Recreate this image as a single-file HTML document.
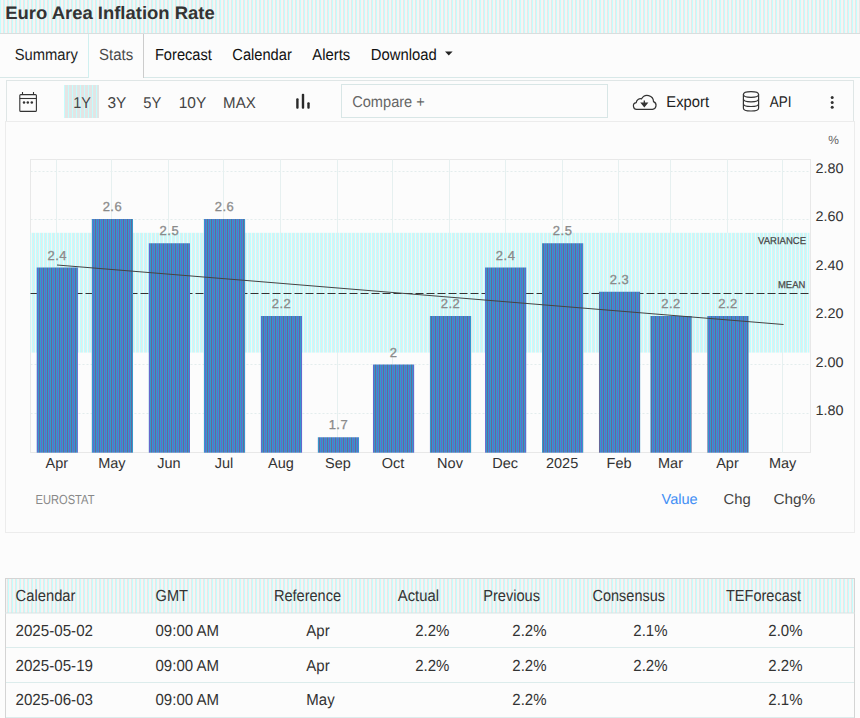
<!DOCTYPE html><html><head><meta charset="utf-8"><style>
html,body{margin:0;padding:0;background:#fcfcfc;width:860px;height:718px;overflow:hidden}
svg{display:block;font-family:'Liberation Sans', sans-serif;text-rendering:geometricPrecision}
</style></head><body>
<svg width="860" height="718" viewBox="0 0 860 718">
<defs>
<pattern id="phdr" x="0" y="0" width="4" height="4" patternUnits="userSpaceOnUse">
<rect x="0" y="0" width="1" height="4" fill="#c3fefe"/><rect x="1" y="0" width="1" height="4" fill="#f6f3f2"/><rect x="2" y="0" width="1" height="4" fill="#f5f5f4"/><rect x="3" y="0" width="1" height="4" fill="#e8e7e7"/>
</pattern>
<pattern id="pband" x="0" y="0" width="4" height="4" patternUnits="userSpaceOnUse">
<rect x="0" y="0" width="1" height="4" fill="#bfffff"/><rect x="1" y="0" width="1" height="4" fill="#e8e8e8"/><rect x="2" y="0" width="1" height="4" fill="#bfffff"/><rect x="3" y="0" width="1" height="4" fill="#f4f4f4"/>
</pattern>
<pattern id="pbar" x="0" y="0" width="4" height="4" patternUnits="userSpaceOnUse">
<rect x="0" y="0" width="1" height="4" fill="#3399cc"/><rect x="1" y="0" width="1" height="4" fill="#6666cc"/><rect x="2" y="0" width="1" height="4" fill="#3399cc"/><rect x="3" y="0" width="1" height="4" fill="#666699"/>
</pattern>
<pattern id="psel" x="0" y="0" width="4" height="4" patternUnits="userSpaceOnUse">
<rect x="0" y="0" width="4" height="4" fill="#e4e4e4"/><rect x="0" y="0" width="1" height="4" fill="#c4fdfd"/>
</pattern>
</defs>
<rect x="0" y="0" width="860" height="718" fill="#fcfcfc"/>

<rect x="0" y="0" width="860" height="33" fill="url(#phdr)"/>
<rect x="0" y="33" width="860" height="1" fill="#d8dede"/>
<text x="5.2" y="19.2" font-size="18" fill="#333" font-weight="700" text-anchor="start" textLength="209.5" lengthAdjust="spacingAndGlyphs" >Euro Area Inflation Rate</text>
<rect x="0" y="77" width="88" height="1" fill="#d8e8e8"/>
<rect x="143" y="77" width="717" height="1" fill="#d8e8e8"/>
<rect x="88" y="34" width="1" height="44" fill="#d0f0f0"/>
<rect x="143" y="34" width="1" height="44" fill="#cccccc"/>
<text transform="translate(14.7 60.2) scale(1 1.07)" x="0" y="0" font-size="15" fill="#222" font-weight="400" text-anchor="start" textLength="63.2" lengthAdjust="spacingAndGlyphs" >Summary</text>
<text transform="translate(99 60.0) scale(1 1.07)" x="0" y="0" font-size="15" fill="#4a4a4a" font-weight="400" text-anchor="start" textLength="34.2" lengthAdjust="spacingAndGlyphs" >Stats</text>
<text transform="translate(154.9 60.3) scale(1 1.07)" x="0" y="0" font-size="15" fill="#111" font-weight="400" text-anchor="start" textLength="57" lengthAdjust="spacingAndGlyphs" >Forecast</text>
<text transform="translate(232.3 60.3) scale(1 1.07)" x="0" y="0" font-size="15" fill="#111" font-weight="400" text-anchor="start" textLength="59.5" lengthAdjust="spacingAndGlyphs" >Calendar</text>
<text transform="translate(312.3 60.3) scale(1 1.07)" x="0" y="0" font-size="15" fill="#111" font-weight="400" text-anchor="start" textLength="37.9" lengthAdjust="spacingAndGlyphs" >Alerts</text>
<text transform="translate(370.7 60.3) scale(1 1.07)" x="0" y="0" font-size="15" fill="#111" font-weight="400" text-anchor="start" textLength="66" lengthAdjust="spacingAndGlyphs" >Download</text>
<path d="M445 51.5 L452.6 51.5 L448.8 55.6 Z" fill="#222"/>
<rect x="6.5" y="80.5" width="847" height="41" fill="#fcfcfc" stroke="#dfe6e6" stroke-width="1"/>
<g fill="none" stroke="#333" stroke-width="1.1"><rect x="19.8" y="94.6" width="16.6" height="16.8" rx="1"/><line x1="19.8" y1="98.5" x2="36.4" y2="98.5"/><line x1="22.5" y1="92" x2="22.5" y2="95"/><line x1="33.5" y1="92" x2="33.5" y2="95"/></g>
<g fill="#333"><circle cx="24" cy="102.4" r="1.25"/><circle cx="27.8" cy="102.4" r="1.25"/><circle cx="31.8" cy="102.4" r="1.25"/></g>
<rect x="64" y="85" width="35" height="33" fill="url(#psel)"/>
<text transform="translate(73.3 107.6) scale(1 1.04)" x="0" y="0" font-size="15" fill="#444" font-weight="400" text-anchor="start" textLength="17.7" lengthAdjust="spacingAndGlyphs" >1Y</text>
<text transform="translate(107.4 107.6) scale(1 1.04)" x="0" y="0" font-size="15" fill="#444" font-weight="400" text-anchor="start" textLength="18.9" lengthAdjust="spacingAndGlyphs" >3Y</text>
<text transform="translate(143.2 107.6) scale(1 1.04)" x="0" y="0" font-size="15" fill="#444" font-weight="400" text-anchor="start" textLength="18" lengthAdjust="spacingAndGlyphs" >5Y</text>
<text transform="translate(178.7 107.6) scale(1 1.04)" x="0" y="0" font-size="15" fill="#444" font-weight="400" text-anchor="start" textLength="27.6" lengthAdjust="spacingAndGlyphs" >10Y</text>
<text transform="translate(223.1 107.6) scale(1 1.04)" x="0" y="0" font-size="15" fill="#444" font-weight="400" text-anchor="start" textLength="32.6" lengthAdjust="spacingAndGlyphs" >MAX</text>
<g fill="#2a2a2a"><rect x="296.2" y="98.2" width="2.4" height="10.6" rx="1"/><rect x="301.8" y="93.7" width="2.4" height="15.1" rx="1"/><rect x="307.3" y="102.2" width="2.4" height="6.6" rx="1"/></g>
<rect x="341.5" y="84.5" width="266" height="33" fill="#fcfcfc" stroke="#d8e6e6" stroke-width="1"/>
<text transform="translate(352.2 107.2) scale(1 1.04)" x="0" y="0" font-size="15" fill="#666" font-weight="400" text-anchor="start" textLength="72.6" lengthAdjust="spacingAndGlyphs" >Compare +</text>
<path d="M637.5 109.3 H652.5 A4 4 0 0 0 653.5 101.6 A6.3 6.3 0 0 0 641.6 98.8 A4.4 4.4 0 0 0 636.2 102.6 A3.4 3.4 0 0 0 637.5 109.3 Z" fill="none" stroke="#333" stroke-width="1.2"/>
<path d="M644.3 100.5 V105 M641.6 103.2 L644.3 106.4 L647 103.2 Z" fill="#333" stroke="#333" stroke-width="1.3"/>
<text transform="translate(666.3 107.1) scale(1 1.04)" x="0" y="0" font-size="15" fill="#222" font-weight="400" text-anchor="start" textLength="42.7" lengthAdjust="spacingAndGlyphs" >Export</text>
<g fill="none" stroke="#333" stroke-width="1.2"><ellipse cx="751" cy="94.5" rx="7.6" ry="2.8"/><path d="M743.4 94.5 V108.2 A7.6 2.8 0 0 0 758.6 108.2 V94.5"/><path d="M743.4 99.1 A7.6 2.8 0 0 0 758.6 99.1"/><path d="M743.4 103.7 A7.6 2.8 0 0 0 758.6 103.7"/></g>
<text transform="translate(769.7 107.0) scale(1 1.04)" x="0" y="0" font-size="15" fill="#222" font-weight="400" text-anchor="start" textLength="21.7" lengthAdjust="spacingAndGlyphs" >API</text>
<g fill="#333"><circle cx="832.2" cy="97.6" r="1.5"/><circle cx="832.2" cy="102.5" r="1.5"/><circle cx="832.2" cy="107.3" r="1.5"/></g>
<rect x="5.5" y="121.5" width="849" height="411" fill="none" stroke="#ececec" stroke-width="1"/>
<line x1="30.5" y1="171.5" x2="810.5" y2="171.5" stroke="#e3eded" stroke-width="1" stroke-dasharray="2,2"/>
<line x1="30.5" y1="219.5" x2="810.5" y2="219.5" stroke="#e3eded" stroke-width="1" stroke-dasharray="2,2"/>
<line x1="30.5" y1="268.5" x2="810.5" y2="268.5" stroke="#e3eded" stroke-width="1" stroke-dasharray="2,2"/>
<line x1="30.5" y1="316.5" x2="810.5" y2="316.5" stroke="#e3eded" stroke-width="1" stroke-dasharray="2,2"/>
<line x1="30.5" y1="364.5" x2="810.5" y2="364.5" stroke="#e3eded" stroke-width="1" stroke-dasharray="2,2"/>
<line x1="30.5" y1="413.5" x2="810.5" y2="413.5" stroke="#e3eded" stroke-width="1" stroke-dasharray="2,2"/>
<rect x="30.5" y="159.5" width="780.0" height="293.0" fill="none" stroke="#e8e8e8" stroke-width="1"/>
<line x1="56.5" y1="159.5" x2="56.5" y2="452.5" stroke="#e6f0f0" stroke-width="1"/>
<line x1="111.5" y1="159.5" x2="111.5" y2="452.5" stroke="#e6f0f0" stroke-width="1"/>
<line x1="168.5" y1="159.5" x2="168.5" y2="452.5" stroke="#e6f0f0" stroke-width="1"/>
<line x1="223.5" y1="159.5" x2="223.5" y2="452.5" stroke="#e6f0f0" stroke-width="1"/>
<line x1="280.5" y1="159.5" x2="280.5" y2="452.5" stroke="#e6f0f0" stroke-width="1"/>
<line x1="337.5" y1="159.5" x2="337.5" y2="452.5" stroke="#e6f0f0" stroke-width="1"/>
<line x1="392.5" y1="159.5" x2="392.5" y2="452.5" stroke="#e6f0f0" stroke-width="1"/>
<line x1="449.5" y1="159.5" x2="449.5" y2="452.5" stroke="#e6f0f0" stroke-width="1"/>
<line x1="505.5" y1="159.5" x2="505.5" y2="452.5" stroke="#e6f0f0" stroke-width="1"/>
<line x1="562.5" y1="159.5" x2="562.5" y2="452.5" stroke="#e6f0f0" stroke-width="1"/>
<line x1="618.5" y1="159.5" x2="618.5" y2="452.5" stroke="#e6f0f0" stroke-width="1"/>
<line x1="670.5" y1="159.5" x2="670.5" y2="452.5" stroke="#e6f0f0" stroke-width="1"/>
<line x1="727.5" y1="159.5" x2="727.5" y2="452.5" stroke="#e6f0f0" stroke-width="1"/>
<line x1="782.5" y1="159.5" x2="782.5" y2="452.5" stroke="#e6f0f0" stroke-width="1"/>
<rect x="30.5" y="232.8" width="779.0" height="119.8" fill="url(#pband)"/>
<line x1="30.5" y1="293.5" x2="810.5" y2="293.5" stroke="#333" stroke-width="1" stroke-dasharray="8,3"/>
<rect x="36.70" y="267.50" width="41.2" height="185.20" fill="url(#pbar)"/>
<text x="57.30" y="259.50" font-size="13" fill="#8a8a8a" font-weight="400" text-anchor="middle" letter-spacing="0.5" stroke="#8a8a8a" stroke-width="0.3">2.4</text>
<text x="56.80" y="467.6" font-size="14.5" fill="#333" font-weight="400" text-anchor="middle" >Apr</text>
<rect x="91.82" y="219.00" width="41.2" height="233.70" fill="url(#pbar)"/>
<text x="112.42" y="211.00" font-size="13" fill="#8a8a8a" font-weight="400" text-anchor="middle" letter-spacing="0.5" stroke="#8a8a8a" stroke-width="0.3">2.6</text>
<text x="111.92" y="467.6" font-size="14.5" fill="#333" font-weight="400" text-anchor="middle" >May</text>
<rect x="148.79" y="243.25" width="41.2" height="209.45" fill="url(#pbar)"/>
<text x="169.39" y="235.25" font-size="13" fill="#8a8a8a" font-weight="400" text-anchor="middle" letter-spacing="0.5" stroke="#8a8a8a" stroke-width="0.3">2.5</text>
<text x="168.89" y="467.6" font-size="14.5" fill="#333" font-weight="400" text-anchor="middle" >Jun</text>
<rect x="203.91" y="219.00" width="41.2" height="233.70" fill="url(#pbar)"/>
<text x="224.51" y="211.00" font-size="13" fill="#8a8a8a" font-weight="400" text-anchor="middle" letter-spacing="0.5" stroke="#8a8a8a" stroke-width="0.3">2.6</text>
<text x="224.01" y="467.6" font-size="14.5" fill="#333" font-weight="400" text-anchor="middle" >Jul</text>
<rect x="260.87" y="316.00" width="41.2" height="136.70" fill="url(#pbar)"/>
<text x="281.47" y="308.00" font-size="13" fill="#8a8a8a" font-weight="400" text-anchor="middle" letter-spacing="0.5" stroke="#8a8a8a" stroke-width="0.3">2.2</text>
<text x="280.97" y="467.6" font-size="14.5" fill="#333" font-weight="400" text-anchor="middle" >Aug</text>
<rect x="317.84" y="437.25" width="41.2" height="15.45" fill="url(#pbar)"/>
<text x="338.44" y="429.25" font-size="13" fill="#8a8a8a" font-weight="400" text-anchor="middle" letter-spacing="0.5" stroke="#8a8a8a" stroke-width="0.3">1.7</text>
<text x="337.94" y="467.6" font-size="14.5" fill="#333" font-weight="400" text-anchor="middle" >Sep</text>
<rect x="372.96" y="364.50" width="41.2" height="88.20" fill="url(#pbar)"/>
<text x="393.56" y="356.50" font-size="13" fill="#8a8a8a" font-weight="400" text-anchor="middle" letter-spacing="0.5" stroke="#8a8a8a" stroke-width="0.3">2</text>
<text x="393.06" y="467.6" font-size="14.5" fill="#333" font-weight="400" text-anchor="middle" >Oct</text>
<rect x="429.92" y="316.00" width="41.2" height="136.70" fill="url(#pbar)"/>
<text x="450.52" y="308.00" font-size="13" fill="#8a8a8a" font-weight="400" text-anchor="middle" letter-spacing="0.5" stroke="#8a8a8a" stroke-width="0.3">2.2</text>
<text x="450.02" y="467.6" font-size="14.5" fill="#333" font-weight="400" text-anchor="middle" >Nov</text>
<rect x="485.05" y="267.50" width="41.2" height="185.20" fill="url(#pbar)"/>
<text x="505.65" y="259.50" font-size="13" fill="#8a8a8a" font-weight="400" text-anchor="middle" letter-spacing="0.5" stroke="#8a8a8a" stroke-width="0.3">2.4</text>
<text x="505.15" y="467.6" font-size="14.5" fill="#333" font-weight="400" text-anchor="middle" >Dec</text>
<rect x="542.01" y="243.25" width="41.2" height="209.45" fill="url(#pbar)"/>
<text x="562.61" y="235.25" font-size="13" fill="#8a8a8a" font-weight="400" text-anchor="middle" letter-spacing="0.5" stroke="#8a8a8a" stroke-width="0.3">2.5</text>
<text x="562.11" y="467.6" font-size="14.5" fill="#333" font-weight="400" text-anchor="middle" >2025</text>
<rect x="598.97" y="291.75" width="41.2" height="160.95" fill="url(#pbar)"/>
<text x="619.57" y="283.75" font-size="13" fill="#8a8a8a" font-weight="400" text-anchor="middle" letter-spacing="0.5" stroke="#8a8a8a" stroke-width="0.3">2.3</text>
<text x="619.07" y="467.6" font-size="14.5" fill="#333" font-weight="400" text-anchor="middle" >Feb</text>
<rect x="650.42" y="316.00" width="41.2" height="136.70" fill="url(#pbar)"/>
<text x="671.02" y="308.00" font-size="13" fill="#8a8a8a" font-weight="400" text-anchor="middle" letter-spacing="0.5" stroke="#8a8a8a" stroke-width="0.3">2.2</text>
<text x="670.52" y="467.6" font-size="14.5" fill="#333" font-weight="400" text-anchor="middle" >Mar</text>
<rect x="707.39" y="316.00" width="41.2" height="136.70" fill="url(#pbar)"/>
<text x="727.99" y="308.00" font-size="13" fill="#8a8a8a" font-weight="400" text-anchor="middle" letter-spacing="0.5" stroke="#8a8a8a" stroke-width="0.3">2.2</text>
<text x="727.49" y="467.6" font-size="14.5" fill="#333" font-weight="400" text-anchor="middle" >Apr</text>
<text x="782.61" y="467.6" font-size="14.5" fill="#333" font-weight="400" text-anchor="middle" >May</text>
<line x1="57" y1="265" x2="783.5" y2="324.5" stroke="#444" stroke-width="1"/>
<text x="806" y="244" font-size="10" fill="#484848" font-weight="400" text-anchor="end" textLength="48" lengthAdjust="spacingAndGlyphs" stroke="#484848" stroke-width="0.25">VARIANCE</text>
<text x="805.3" y="287.7" font-size="10" fill="#484848" font-weight="400" text-anchor="end" textLength="27.3" lengthAdjust="spacingAndGlyphs" stroke="#484848" stroke-width="0.25">MEAN</text>
<text x="815.5" y="172.50" font-size="14" fill="#333" font-weight="400" text-anchor="start" textLength="28" lengthAdjust="spacingAndGlyphs" >2.80</text>
<text x="815.5" y="221.00" font-size="14" fill="#333" font-weight="400" text-anchor="start" textLength="28" lengthAdjust="spacingAndGlyphs" >2.60</text>
<text x="815.5" y="269.50" font-size="14" fill="#333" font-weight="400" text-anchor="start" textLength="28" lengthAdjust="spacingAndGlyphs" >2.40</text>
<text x="815.5" y="318.00" font-size="14" fill="#333" font-weight="400" text-anchor="start" textLength="28" lengthAdjust="spacingAndGlyphs" >2.20</text>
<text x="815.5" y="366.50" font-size="14" fill="#333" font-weight="400" text-anchor="start" textLength="28" lengthAdjust="spacingAndGlyphs" >2.00</text>
<text x="815.5" y="415.00" font-size="14" fill="#333" font-weight="400" text-anchor="start" textLength="28" lengthAdjust="spacingAndGlyphs" >1.80</text>
<text x="828.3" y="143.8" font-size="12" fill="#666" font-weight="400" text-anchor="start" >%</text>
<text transform="translate(35.5 503.6) scale(1 1.05)" x="0" y="0" font-size="12.5" fill="#888" font-weight="400" text-anchor="start" textLength="59" lengthAdjust="spacingAndGlyphs" >EUROSTAT</text>
<text x="661.5" y="504" font-size="14.5" fill="#428ff5" font-weight="400" text-anchor="start" textLength="36.2" lengthAdjust="spacingAndGlyphs" >Value</text>
<text x="723.6" y="504" font-size="14.5" fill="#444" font-weight="400" text-anchor="start" textLength="27.2" lengthAdjust="spacingAndGlyphs" >Chg</text>
<text x="773.4" y="504" font-size="14.5" fill="#444" font-weight="400" text-anchor="start" textLength="41.9" lengthAdjust="spacingAndGlyphs" >Chg%</text>
<rect x="5" y="578" width="850" height="35" fill="url(#phdr)"/>
<rect x="5.5" y="578.5" width="849" height="140" fill="none" stroke="#d4d4d4" stroke-width="1"/>
<rect x="5" y="612.5" width="850" height="1" fill="#d8e4e4"/>
<rect x="6" y="647" width="848" height="1" fill="#dcecec"/>
<rect x="6" y="682" width="848" height="1" fill="#dcecec"/>
<rect x="6" y="717" width="848" height="1" fill="#dcecec"/>
<text transform="translate(15.5 601.2) scale(1 1.07)" x="0" y="0" font-size="15" fill="#333" font-weight="400" text-anchor="start" textLength="60" lengthAdjust="spacingAndGlyphs" >Calendar</text>
<text transform="translate(155.5 601.2) scale(1 1.07)" x="0" y="0" font-size="15" fill="#333" font-weight="400" text-anchor="start" textLength="32.5" lengthAdjust="spacingAndGlyphs" >GMT</text>
<text transform="translate(274 601.2) scale(1 1.07)" x="0" y="0" font-size="15" fill="#333" font-weight="400" text-anchor="start" textLength="67" lengthAdjust="spacingAndGlyphs" >Reference</text>
<text transform="translate(397.8 601.2) scale(1 1.07)" x="0" y="0" font-size="15" fill="#333" font-weight="400" text-anchor="start" textLength="41.2" lengthAdjust="spacingAndGlyphs" >Actual</text>
<text transform="translate(483.2 601.2) scale(1 1.07)" x="0" y="0" font-size="15" fill="#333" font-weight="400" text-anchor="start" textLength="56.8" lengthAdjust="spacingAndGlyphs" >Previous</text>
<text transform="translate(592.5 601.2) scale(1 1.07)" x="0" y="0" font-size="15" fill="#333" font-weight="400" text-anchor="start" textLength="72.5" lengthAdjust="spacingAndGlyphs" >Consensus</text>
<text transform="translate(726 601.2) scale(1 1.07)" x="0" y="0" font-size="15" fill="#333" font-weight="400" text-anchor="start" textLength="75" lengthAdjust="spacingAndGlyphs" >TEForecast</text>
<text transform="translate(15.5 636.0) scale(1 1.07)" x="0" y="0" font-size="15" fill="#333" font-weight="400" text-anchor="start" textLength="77.5" lengthAdjust="spacingAndGlyphs" >2025-05-02</text>
<text transform="translate(155.5 636.0) scale(1 1.07)" x="0" y="0" font-size="15" fill="#333" font-weight="400" text-anchor="start" textLength="63.5" lengthAdjust="spacingAndGlyphs" >09:00 AM</text>
<text transform="translate(306.3 636.0) scale(1 1.07)" x="0" y="0" font-size="15" fill="#333" font-weight="400" text-anchor="start" >Apr</text>
<text transform="translate(449.4 636.0) scale(1 1.07)" x="0" y="0" font-size="15" fill="#333" font-weight="400" text-anchor="end" >2.2%</text>
<text transform="translate(546.5 636.0) scale(1 1.07)" x="0" y="0" font-size="15" fill="#333" font-weight="400" text-anchor="end" >2.2%</text>
<text transform="translate(667.5 636.0) scale(1 1.07)" x="0" y="0" font-size="15" fill="#333" font-weight="400" text-anchor="end" >2.1%</text>
<text transform="translate(802.5 636.0) scale(1 1.07)" x="0" y="0" font-size="15" fill="#333" font-weight="400" text-anchor="end" >2.0%</text>
<text transform="translate(15.5 670.6) scale(1 1.07)" x="0" y="0" font-size="15" fill="#333" font-weight="400" text-anchor="start" textLength="77.5" lengthAdjust="spacingAndGlyphs" >2025-05-19</text>
<text transform="translate(155.5 670.6) scale(1 1.07)" x="0" y="0" font-size="15" fill="#333" font-weight="400" text-anchor="start" textLength="63.5" lengthAdjust="spacingAndGlyphs" >09:00 AM</text>
<text transform="translate(306.3 670.6) scale(1 1.07)" x="0" y="0" font-size="15" fill="#333" font-weight="400" text-anchor="start" >Apr</text>
<text transform="translate(449.4 670.6) scale(1 1.07)" x="0" y="0" font-size="15" fill="#333" font-weight="400" text-anchor="end" >2.2%</text>
<text transform="translate(546.5 670.6) scale(1 1.07)" x="0" y="0" font-size="15" fill="#333" font-weight="400" text-anchor="end" >2.2%</text>
<text transform="translate(667.5 670.6) scale(1 1.07)" x="0" y="0" font-size="15" fill="#333" font-weight="400" text-anchor="end" >2.2%</text>
<text transform="translate(802.5 670.6) scale(1 1.07)" x="0" y="0" font-size="15" fill="#333" font-weight="400" text-anchor="end" >2.2%</text>
<text transform="translate(15.5 705.2) scale(1 1.07)" x="0" y="0" font-size="15" fill="#333" font-weight="400" text-anchor="start" textLength="77.5" lengthAdjust="spacingAndGlyphs" >2025-06-03</text>
<text transform="translate(155.5 705.2) scale(1 1.07)" x="0" y="0" font-size="15" fill="#333" font-weight="400" text-anchor="start" textLength="63.5" lengthAdjust="spacingAndGlyphs" >09:00 AM</text>
<text transform="translate(306.3 705.2) scale(1 1.07)" x="0" y="0" font-size="15" fill="#333" font-weight="400" text-anchor="start" >May</text>
<text transform="translate(546.5 705.2) scale(1 1.07)" x="0" y="0" font-size="15" fill="#333" font-weight="400" text-anchor="end" >2.2%</text>
<text transform="translate(802.5 705.2) scale(1 1.07)" x="0" y="0" font-size="15" fill="#333" font-weight="400" text-anchor="end" >2.1%</text>
</svg></body></html>
